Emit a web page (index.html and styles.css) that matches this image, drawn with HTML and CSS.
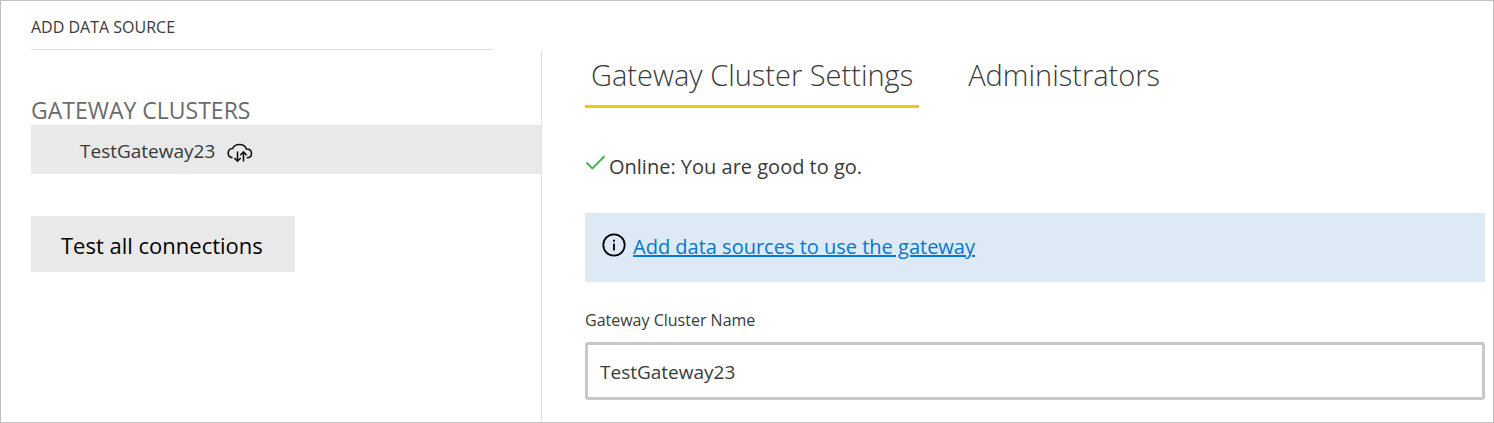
FILE: index.html
```html
<!DOCTYPE html>
<html lang="en">
<head>
<meta charset="utf-8">
<meta name="viewport" content="width=device-width, initial-scale=1">
<title>Gateways</title>
<link rel="stylesheet" href="styles.css">
</head>
<body>
<div class="page">
  <aside class="sidebar">
    <a class="add-source" href="#add">ADD DATA SOURCE</a>
    <h2 class="section-title">GATEWAY CLUSTERS</h2>
    <a class="cluster" href="#cluster">
      <span>TestGateway23</span>
      <svg class="cloud-icon" viewBox="0 0 26 20" aria-hidden="true">
        <path d="M5.500 14.600C3 14.400 1.200 12.500 1.200 10.200 1.200 7.600 3.100 5.700 5.700 5.500 6.700 2.900 9.400 1.500 12.400 1.500 15.700 1.500 18.400 3.200 19.400 6 22.500 6 24.500 7.800 24.500 10.400 24.500 12.800 22.800 14.700 19.800 14.800"/>
        <path d="M10.500 8.500V18M7.300 15l3.200 3.200 3.200-3.200M16.500 18.500V9M13.300 12.200L16.500 9l3.200 3.200"/>
      </svg>
    </a>
    <button class="test-button" type="button">Test all connections</button>
  </aside>
  <main class="content">
    <nav class="tabs">
      <a class="tab tab-active" href="#settings">Gateway Cluster Settings</a>
      <a class="tab" href="#admins">Administrators</a>
    </nav>
    <p class="status">
      <svg class="check-icon" viewBox="0 0 20 15" aria-hidden="true"><path d="M1.500 7.500l5.800 6L19.500 1.200"/></svg>
      <span>Online: You are good to go.</span>
    </p>
    <div class="notice">
      <svg class="info-icon" viewBox="0 0 24 24" aria-hidden="true">
        <circle cx="12" cy="12" r="10.700"/>
        <path d="M12 10.500V17.500M12 6.800V8.800"/>
      </svg>
      <a class="notice-link" href="#add">Add data sources to use the gateway</a>
    </div>
    <label class="field-label" for="cluster-name">Gateway Cluster Name</label>
    <input class="field-input" id="cluster-name" type="text" value="TestGateway23">
  </main>
</div>
</body>
</html>
```
FILE: styles.css
```css
* {
  box-sizing: border-box;
}

body {
  margin: 0;
  background: #fff;
  color: #3a3a3a;
  font-family: "Segoe UI", "Open Sans", "Noto Sans", sans-serif;
  font-size: 20px;
}

a {
  color: inherit;
  text-decoration: none;
}

.page {
  display: grid;
  grid-template-columns: 540px 1fr;
  min-height: 100vh;
  border: 1px solid #c1c1c1;
}

.sidebar {
  display: flex;
  flex-direction: column;
  align-items: flex-start;
  padding: 16px 0 0 30px;
}

.add-source {
  align-self: stretch;
  margin-right: 48px;
  padding-bottom: 12px;
  border-bottom: 1px solid #dfdfdf;
  font-size: 16px;
  line-height: 20px;
}

.section-title {
  margin: 46px 0 0;
  color: #6b6b6b;
  font-size: 23px;
  font-weight: 400;
  line-height: 29px;
}

.cluster {
  display: flex;
  align-items: center;
  align-self: stretch;
  gap: 12px;
  height: 49px;
  padding: 2px 0 0 49px;
  background: #e9e9e9;
  font-size: 19px;
}

.cloud-icon {
  width: 26px;
  height: 20px;
  margin-top: 4px;
  fill: none;
  stroke: #111;
  stroke-width: 1.6;
}

.test-button {
  margin-top: 42px;
  padding: 13px 32px 11px 30px;
  border: 0;
  background: #e9e9e9;
  color: #000;
  font: inherit;
  font-size: 22px;
  line-height: 32px;
}

.content {
  margin-top: 50px;
  padding: 0 8px 22px 43px;
  border-left: 1px solid #dfdfdf;
}

.tabs {
  display: flex;
  gap: 43px;
}

.tab {
  padding: 3px 6px 9px;
  border-bottom: 3px solid transparent;
  font-size: 29px;
  font-weight: 300;
  line-height: 42px;
}

.tab-active {
  border-bottom-color: #f2c811;
}

.status {
  display: flex;
  align-items: center;
  gap: 4px;
  margin: 44px 0 32px;
  line-height: 29px;
}

.check-icon {
  width: 20px;
  height: 15px;
  margin-bottom: 8px;
  fill: none;
  stroke: #37b34a;
  stroke-width: 1.8;
}

.notice {
  display: flex;
  align-items: center;
  gap: 7px;
  min-height: 69px;
  padding: 0 17px 2px;
  background: #dde9f5;
}

.info-icon {
  width: 24px;
  height: 24px;
  margin-bottom: 4px;
  fill: none;
  stroke: #000;
  stroke-width: 1.8;
}

.notice-link {
  color: #0078d4;
  text-decoration: underline;
  text-decoration-thickness: 2px;
}

.field-label {
  display: block;
  margin: 28px 0 12px;
  font-size: 16px;
  line-height: 20px;
}

.field-input {
  display: block;
  width: 100%;
  height: 58px;
  padding: 2px 12px 0;
  border: 3px solid #c8c8c8;
  border-radius: 3px;
  background: #fff;
  color: #3a3a3a;
  font: inherit;
  font-size: 19px;
}
```
